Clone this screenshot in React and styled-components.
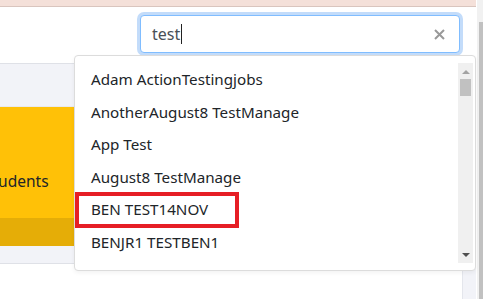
import React from 'react';
import styled, { createGlobalStyle } from 'styled-components';

const GlobalStyle = createGlobalStyle`
  html, body {
    margin: 0;
    padding: 0;
    overflow: hidden;
    background: #fff;
  }
  body {
    font-family: 'Noto Sans', 'Open Sans', sans-serif;
    color: #212529;
  }
`;

const Page = styled.div`
  display: flex;
  width: 483px;
  height: 299px;
  overflow: hidden;
`;

const Main = styled.div`
  position: relative;
  flex: 1;
  min-width: 0;
`;

const PageScroll = styled.div`
  width: 7px;
  display: flex;
  background: #f1f1f1;
  padding-left: 2px;
  box-sizing: border-box;
  border-left: 1px solid #fff;
`;

const PageThumb = styled.div`
  flex: 1;
  margin-top: 22px;
  background: #c1c1c1;
`;

const TopBand = styled.div`
  height: 6px;
  background: #f4e0d9;
  border-bottom: 1px solid #d9c5be;
`;

const SearchRow = styled.div`
  display: flex;
  justify-content: flex-end;
  padding: 8px 16px 0 0;
`;

const SearchBox = styled.div`
  width: 320px;
  height: 38px;
  box-sizing: border-box;
  display: flex;
  align-items: center;
  padding: 0 14px 0 11px;
  border: 1px solid #80bdff;
  border-radius: 4px;
  box-shadow: 0 0 0 3px #c3dcfa;
  background: #fff;
`;

const SearchText = styled.span`
  flex: 1;
  font-size: 16px;
  color: #495057;
  display: flex;
  align-items: center;
`;

const Caret = styled.span`
  width: 1px;
  height: 20px;
  background: #222;
  margin-left: 1px;
`;

const ClearIcon = styled.svg`
  width: 11px;
  height: 11px;
  stroke: #999;
  stroke-width: 2;
`;

const Body = styled.div`
  display: flex;
  margin-top: 10px;
`;

const Card = styled.div`
  width: 462px;
  height: 201px;
  box-sizing: border-box;
  border-top: 1px solid #dfe1e7;
  border-bottom: 1px solid #dfe1e7;
  background: #f2f3f8;
  padding-top: 42px;
  overflow: hidden;
`;

const SideCard = styled.div`
  flex: 1;
  height: 240px;
  background: #f2f3f8;
  border-left: 1px solid #e4e6ec;
`;

const StatBox = styled.div`
  display: flex;
  flex-direction: column;
  width: 200px;
  background: #ffc107;
  border-top: 1px solid #e8e9ee;
`;

const StatBody = styled.div`
  height: 111px;
  display: flex;
  align-items: center;
  padding-top: 36px;
  box-sizing: border-box;
`;

const StatLabel = styled.span`
  font-size: 15.5px;
  margin-left: -16px;
  color: #212529;
`;

const StatFooter = styled.div`
  height: 28px;
  background: #e5ad07;
`;

const GreenBar = styled.div`
  width: 441px;
  height: 30px;
  margin-top: 20px;
  background: #28a745;
  border-top-right-radius: 5px;
`;

const Menu = styled.div`
  position: absolute;
  left: 74px;
  top: 55px;
  width: 402px;
  height: 216px;
  box-sizing: border-box;
  background: #fff;
  border: 1px solid #dcdcdc;
  border-radius: 4px;
  box-shadow: 0 2px 4px rgba(0, 0, 0, 0.05);
  display: flex;
  padding: 7px 2px 7px 0;
`;

const List = styled.ul`
  list-style: none;
  margin: 0;
  padding: 0;
  flex: 1;
  overflow: hidden;
`;

const Item = styled.li`
  position: relative;
  height: 32.5px;
  display: flex;
  align-items: center;
  padding-left: 16px;
  font-size: 15.2px;
  color: #212529;
  white-space: nowrap;
  &::after {
    content: '';
    display: ${p => (p.$marked ? 'block' : 'none')};
    position: absolute;
    left: 0;
    top: -1px;
    width: 164px;
    height: 36px;
    box-sizing: border-box;
    border: 4px solid #e61e25;
  }
`;

const Track = styled.div`
  width: 15px;
  background: #f0f0f0;
  display: flex;
  flex-direction: column;
  align-items: center;
`;

const Arrow = styled.div`
  width: 0;
  height: 0;
  border-left: 4px solid transparent;
  border-right: 4px solid transparent;
  ${p => (p.$down
    ? 'border-top: 4px solid #505050; margin-top: auto; margin-bottom: 6px;'
    : 'border-bottom: 4px solid #a3a3a3; margin-top: 7px;')}
`;

const Thumb = styled.div`
  width: 11px;
  height: 17px;
  margin-top: 5px;
  background: #c1c1c1;
`;

const names = [
  'Adam ActionTestingjobs',
  'AnotherAugust8 TestManage',
  'App Test',
  'August8 TestManage',
  'BEN TEST14NOV',
  'BENJR1 TESTBEN1',
];

export default function App() {
  return (
    <Page>
      <GlobalStyle />
      <Main>
        <TopBand />
        <SearchRow>
          <SearchBox>
            <SearchText>
              test
              <Caret />
            </SearchText>
            <ClearIcon viewBox="0 0 11 11">
              <path d="M1 1L10 10M10 1L1 10" />
            </ClearIcon>
          </SearchBox>
        </SearchRow>
        <Body>
          <Card>
            <StatBox>
              <StatBody>
                <StatLabel>Students</StatLabel>
              </StatBody>
              <StatFooter />
            </StatBox>
          </Card>
          <SideCard />
        </Body>
        <GreenBar />
        <Menu>
          <List>
            {names.map(n => (
              <Item key={n} $marked={n === 'BEN TEST14NOV'}>{n}</Item>
            ))}
          </List>
          <Track>
            <Arrow />
            <Thumb />
            <Arrow $down />
          </Track>
        </Menu>
      </Main>
      <PageScroll>
        <PageThumb />
      </PageScroll>
    </Page>
  );
}
